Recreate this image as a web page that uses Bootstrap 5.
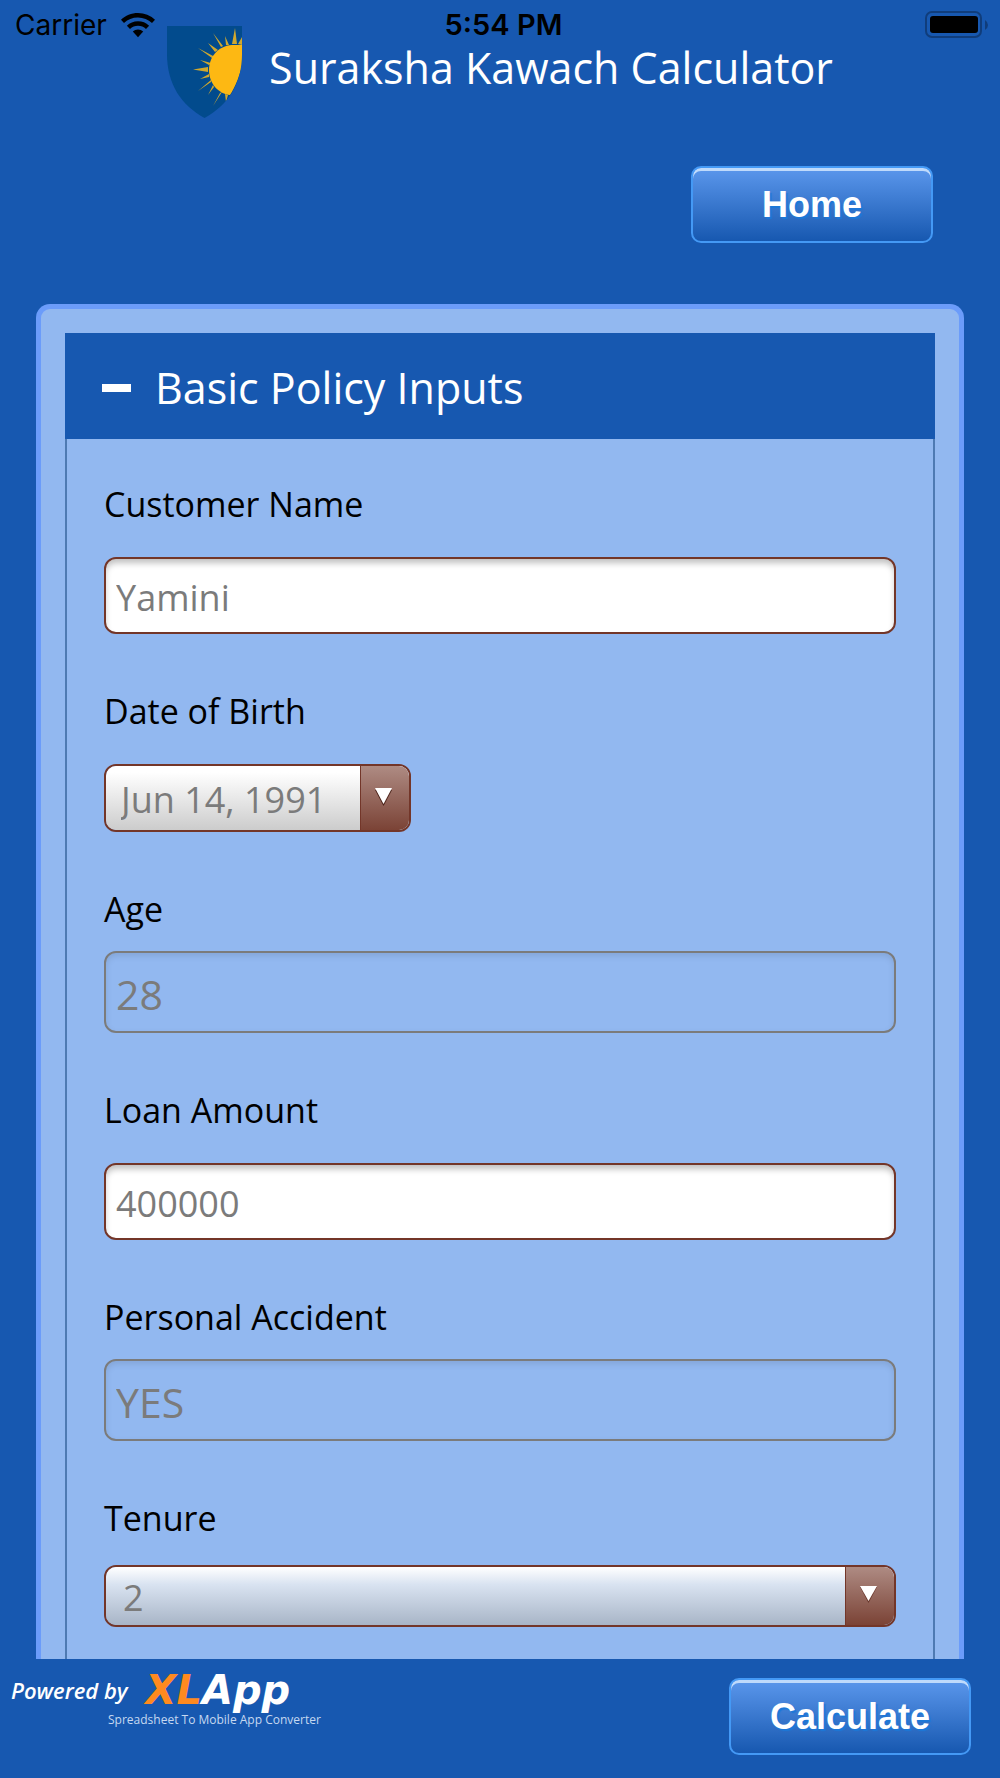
<!DOCTYPE html>
<html lang="en">
<head>
<meta charset="utf-8">
<meta name="viewport" content="width=device-width, initial-scale=1">
<title>Suraksha Kawach Calculator</title>
<link href="https://cdn.jsdelivr.net/npm/bootstrap@5.3.0/dist/css/bootstrap.min.css" rel="stylesheet">
<style>
  :root { --app-blue: #1758b0; --panel-blue: #92b8f0; --brown: #733629; --ink-grey: #7b7b7b; }
  body { background: var(--app-blue); color: #000; font-family: "Open Sans", "Noto Sans", sans-serif; }
  .status-bar { padding: 0 12px 0 15px; height: 50px; font: 28px/30px Inter, sans-serif; }
  .status-bar .clock { font-weight: 600; padding-left: 4px; font-size: 29px; }
  .status-side { flex: 1; gap: 14px; }
  .app-header { padding: 26px 67px 61px; }
  .app-title { margin: 0; font-size: 43px; line-height: 46px; font-weight: 400; color: #fff; padding-top: 19px; }
  .brand-row { gap: 26px; margin-bottom: 48px; }
  .btn-glossy { width: 242px; height: 77px; padding: 0; border: 2px solid #4499f5; border-radius: 10px;
    font: bold 36px/72px "Liberation Sans", sans-serif; color: #fff; text-shadow: 2px 2px 1px #1c78d8;
    background: linear-gradient(#5b97ec, #1758b0); box-shadow: inset 0 3px 0 #bfdafb; }
  .btn-glossy:hover { color: #fff; }
  .panel { margin: 0 36px; padding: 24px 24px 0; background: var(--panel-blue);
    border: 5px solid #6b9cfa; border-bottom: 0; border-radius: 14px 14px 0 0; }
  .section-toggle { height: 106px; padding: 3px 36px 0 37px; gap: 24px; border: 0; background: var(--app-blue); color: #fff;
    font-size: 43px; line-height: 60px; }
  .minus-bar { width: 29px; height: 8px; background: #fff; }
  .section-fields { padding: 45px 37px 32px; border: solid #4e7ab2; border-width: 0 2px; }
  .field { margin-bottom: 57px; }
  .field:last-child { margin-bottom: 0; }
  .field label { display: block; font-size: 34px; line-height: 40px; margin-bottom: 33px; }
  .field.tight label { margin-bottom: 22px; }
  .field.mid label { margin-bottom: 27px; }
  .field .form-control { height: 77px; padding: 3px 10px 0; border: 2px solid var(--brown); border-radius: 12px;
    font-size: 36px; color: var(--ink-grey); background: #fff; box-shadow: inset 0 5px 6px -1px rgba(0,0,0,.25); }
  .field .form-control:disabled { height: 82px; font-size: 41px; border-color: #7b7b7b; background: transparent;
    box-shadow: inset 0 3px 6px rgba(0,0,0,.1); opacity: 1; }
  .picker { position: relative; border: 2px solid var(--brown); border-radius: 12px; overflow: hidden; }
  .picker .form-select { height: 58px; padding: 3px 60px 0 17px; border: 0; border-radius: 0; font-size: 36px; line-height: 55px;
    color: var(--ink-grey); background: linear-gradient(#fff, #d9e3f1 30%, #a8b5c7); }
  .picker.date-picker { width: 307px; }
  .picker.date-picker .form-select { height: 64px; padding-left: 15px; line-height: 61px; background: linear-gradient(#fff 10%, #ccc); }
  .picker-arrow { position: absolute; inset: 0 0 0 auto; width: 49px; padding-right: 4px; border-left: 1px solid var(--brown);
    background: linear-gradient(#ae8b83, #7b4336); pointer-events: none; }
  .app-footer { height: 119px; padding: 0 29px 4px 11px; color: #fff; }
  .powered { padding-top: 11px; }
  .powered-row { gap: 18px; }
  .powered-by { font: italic 600 22px/30px "Open Sans", sans-serif; }
  .xl-name { font: italic bold 40px/40px "DejaVu Sans", sans-serif; }
  .xl-name .xl { color: #ff8a1f; }
  .tagline { padding-left: 97px; font: 12px/20px "Open Sans", sans-serif; color: #c6d8f0; }
</style>
<script src="https://cdn.jsdelivr.net/npm/bootstrap@5.3.0/dist/js/bootstrap.bundle.min.js"></script>
</head>
<body>
<div class="d-flex flex-column min-vh-100">
  <div class="status-bar position-absolute top-0 start-0 w-100 d-flex align-items-center justify-content-between">
    <div class="status-side d-flex align-items-center">
      <span>Carrier</span>
      <svg width="34" height="25" viewBox="0 0 34 25" aria-label="Wi-Fi">
        <path d="M17 0C10.400 0 4.400 2.600 0 6.800l3 3.100A20.200 20.200 0 0 1 17 4.400c5.400 0 10.300 2.100 14 5.500l3-3.100A24.600 24.600 0 0 0 17 0z"/>
        <path d="M17 8.300c-4.300 0-8.200 1.700-11.100 4.400l3.100 3.200a11.600 11.600 0 0 1 16 0l3.100-3.200A16.200 16.200 0 0 0 17 8.300z"/>
        <path d="M17 16.500c-2 0-3.800.8-5.200 2L17 24.300l5.200-5.800a7.900 7.900 0 0 0-5.200-2z"/>
      </svg>
    </div>
    <span class="clock">5:54 PM</span>
    <div class="status-side d-flex justify-content-end">
      <svg width="63" height="28" viewBox="0 0 63 28" aria-label="Battery full">
        <rect x="1" y="1" width="55" height="25" rx="6" fill="none" stroke="#103d7b" stroke-width="2"/>
        <rect x="5" y="5" width="48" height="17" rx="3"/>
        <path d="M60 9q3 2 3 5t-3 5z" fill="#103d7b"/>
      </svg>
    </div>
  </div>

  <header class="app-header">
    <div class="brand-row d-flex justify-content-center">
      <svg width="76" height="92" viewBox="0 0 76 92" aria-label="Company shield">
        <defs><clipPath id="shield"><path d="M0 0h75v28c0 30-14 51-37.500 64C14 79 0 58 0 28z"/></clipPath></defs>
        <g clip-path="url(#shield)">
          <rect width="76" height="92" fill="#024b8d"/>
          <g fill="#d0a82e">
            <path d="M65 18l3-16 2 16zM54 21L46 7l10 13zM59 19l-1-9 4 9zM48 26l-7-9 10 7zM45 32L31 22l17 9zM42 39l-9-5 11 3zM41 46l-15-2.500L41 41zM42 51l-9 2 9-5zM44 56l-13 9 13-11zM47 61l-6 8 5-10zM53 67l-7 13 9-14zM61 69l-2 7-1-8z"/>
            <path d="M71 18l4-7v8z"/>
          </g>
          <path d="M76 19H65C50 20 42 32 42 44c0 14 10 24 21 25C70 58 76 42 76 28z" fill="#fdb813"/>
        </g>
      </svg>
      <h1 class="app-title">Suraksha Kawach Calculator</h1>
    </div>
    <div class="d-flex justify-content-end"><button type="button" class="btn btn-glossy">Home</button></div>
  </header>

  <main class="panel flex-grow-1 d-flex flex-column">
    <button type="button" class="section-toggle d-flex align-items-center w-100" data-bs-toggle="collapse" data-bs-target="#policy" aria-expanded="true">
      <span class="minus-bar"></span><span>Basic Policy Inputs</span>
    </button>
    <form id="policy" class="section-fields collapse show flex-grow-1">
      <div class="field"><label for="cname">Customer Name</label><input id="cname" class="form-control" type="text" value="Yamini"></div>
      <div class="field"><label for="dob">Date of Birth</label>
        <div class="picker date-picker"><select id="dob" class="form-select"><option>Jun 14, 1991</option></select>
          <span class="picker-arrow d-flex justify-content-center"><svg width="19" height="64" viewBox="0 0 19 64"><path d="M1 24h17L9.500 40z" fill="#4b2219"/><path d="M1 22h17L9.500 38z" fill="#fff"/></svg></span></div>
      </div>
      <div class="field tight"><label for="age">Age</label><input id="age" class="form-control" type="text" value="28" disabled></div>
      <div class="field"><label for="loan">Loan Amount</label><input id="loan" class="form-control" type="text" value="400000"></div>
      <div class="field tight"><label for="accident">Personal Accident</label><input id="accident" class="form-control" type="text" value="YES" disabled></div>
      <div class="field mid"><label for="tenure">Tenure</label>
        <div class="picker"><select id="tenure" class="form-select"><option>2</option></select>
          <span class="picker-arrow d-flex justify-content-center"><svg width="19" height="58" viewBox="0 0 19 58"><path d="M1 20h17L9.500 36z" fill="#6a372b"/><path d="M1 19h17L9.500 34z" fill="#fff"/></svg></span></div>
      </div>
    </form>
  </main>

  <footer class="app-footer d-flex align-items-center justify-content-between">
    <div class="powered align-self-start">
      <div class="powered-row d-flex align-items-center">
        <span class="powered-by">Powered by</span><span class="xl-name"><span class="xl">XL</span>App</span>
      </div>
      <div class="tagline">Spreadsheet To Mobile App Converter</div>
    </div>
    <button type="submit" form="policy" class="btn btn-glossy">Calculate</button>
  </footer>
</div>
</body>
</html>
